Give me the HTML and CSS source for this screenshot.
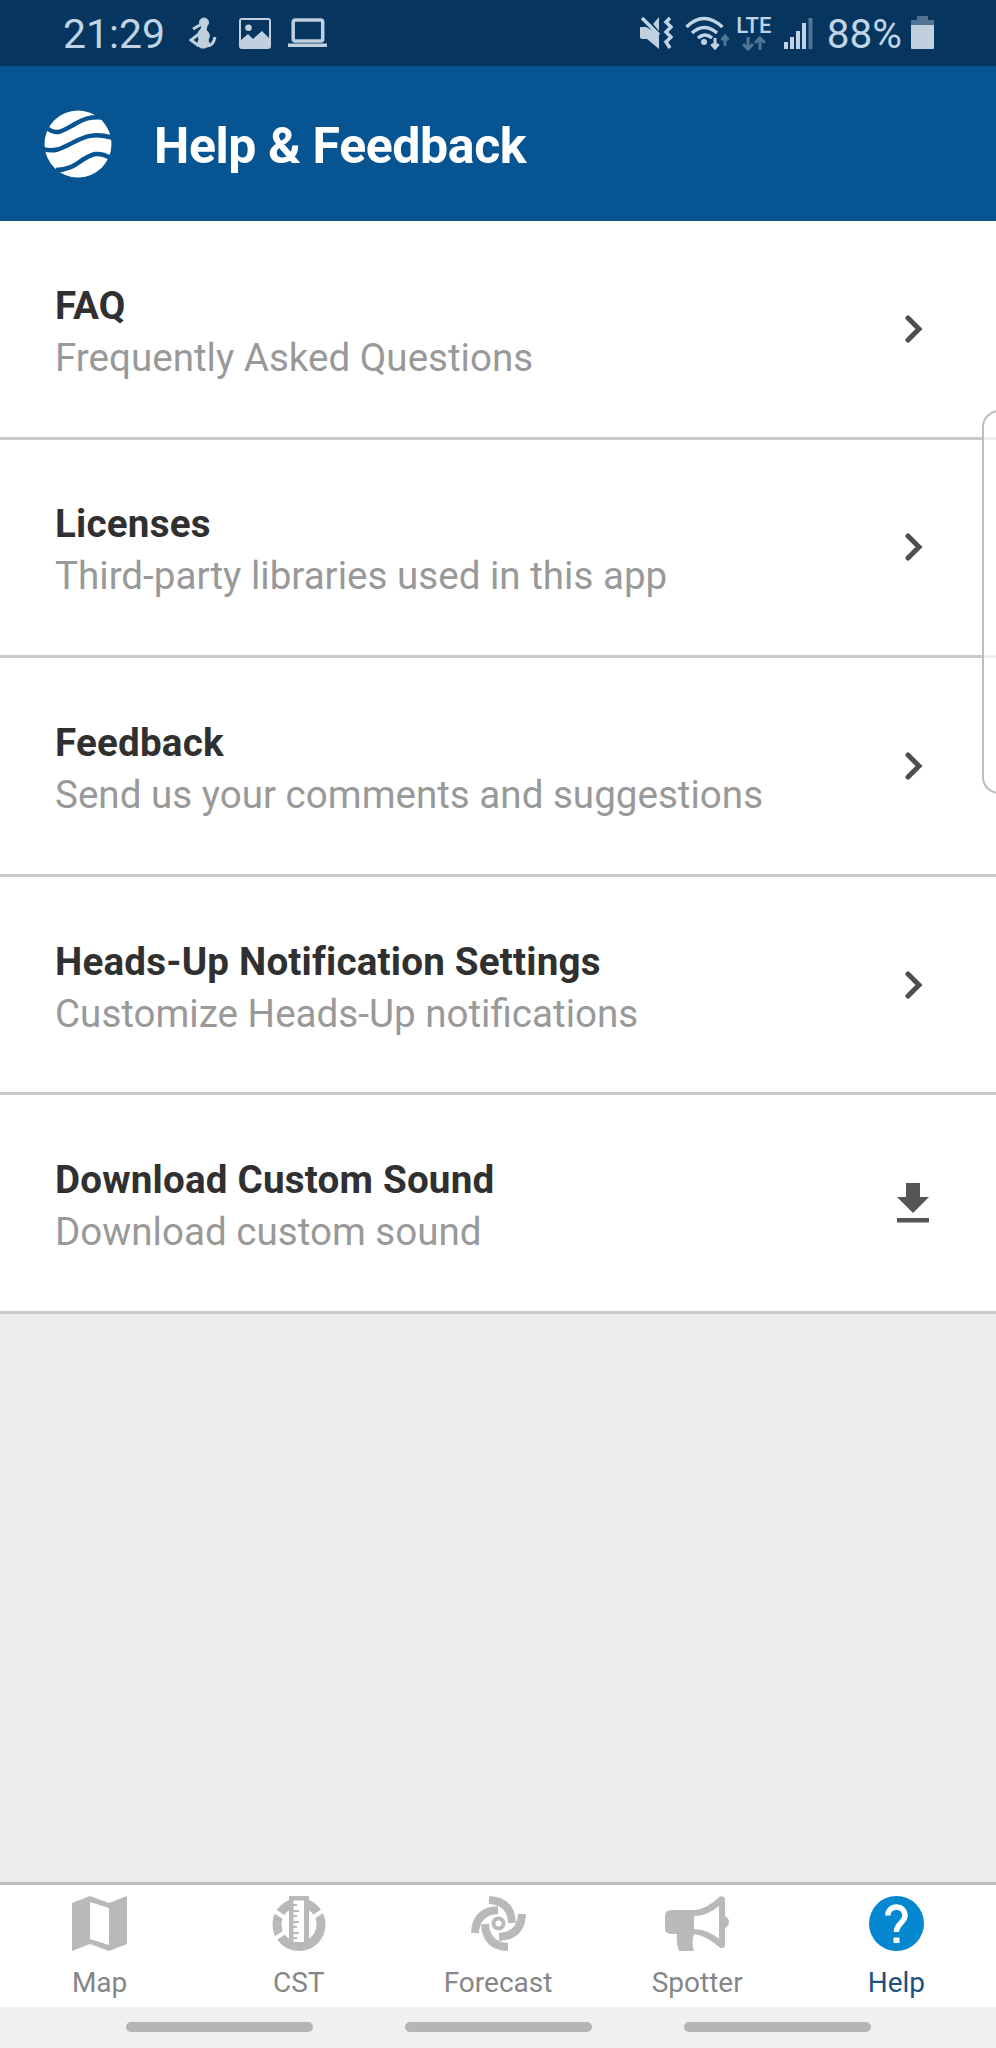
FILE: index.html
```
<!DOCTYPE html>
<html lang="en">
<head>
    <meta charset="UTF-8">
    <meta name="viewport" content="width=device-width, initial-scale=1.0">
    <title>Help &amp; Feedback</title>
    <link rel="stylesheet" href="styles.css">
</head>
<body>
    <div class="app">
        <div class="status-bar">
            <span class="time">21:29</span>
            <svg class="status-person" width="28" height="32" viewBox="0 0 28 32">
                <circle cx="15" cy="5.500" r="4.500" />
                <path d="M13 9h5l-1 4c4 3 4 7 2 10l2 5-5 3h-4l-4-3 2-6c-2-4-1-8 2-10z" />
                <path d="M4 12l7-4M10 17l-8 6 8 6M18 29c5 0 7-4 8-9" />
            </svg>
            <svg class="status-image" width="32" height="31" viewBox="0 0 32 31">
                <path fill-rule="evenodd" d="M3 0h26a3 3 0 0 1 3 3v25a3 3 0 0 1-3 3H3a3 3 0 0 1-3-3V3a3 3 0 0 1 3-3zM2 2v20l7-6 5 5 9-8 7 7V2zM9.500 6.500a3.300 3.300 0 1 1 0 6.600 3.300 3.300 0 0 1 0-6.600z" />
            </svg>
            <svg class="status-laptop" width="39" height="30" viewBox="0 0 39 30">
                <rect x="5.200" y="2" width="29.500" height="21" rx="2" />
                <path d="M0 27.300h39" />
            </svg>
            <div class="status-right">
                <svg width="34" height="34" viewBox="0 0 34 34">
                    <path class="solid" d="M1 11h6l13 7v15L8 23H3q-2 0-2-2zM14 8l6-7v14z" />
                    <path class="line" d="M3 2l17 17M31 2l-4 4 5 5-5 5 5 5-5 5 4 6" />
                </svg>
                <svg class="wifi" width="45" height="34" viewBox="0 0 45 34">
                    <path class="line" d="M1.500 11q17-17 36 0M7 17q12-11 25 0M13 22q7-6 14 0" />
                    <circle class="solid" cx="19" cy="26" r="3" />
                    <path class="line thin" d="M30 22v10M26.500 28l3.500 4 3.500-4" />
                    <path class="line thin dim" d="M40 30V20M36.500 24l3.500-4 3.500 4" />
                </svg>
                <div class="lte">
                    <span>LTE</span>
                    <svg width="24" height="15" viewBox="0 0 24 15">
                        <path class="line thin dim" d="M6 1v12M1 8l5 5 5-5M18 14V2M13 7l5-5 5 5" />
                    </svg>
                </div>
                <svg class="signal" width="29" height="32" viewBox="0 0 29 32">
                    <path class="line bar" d="M2 32v-7M8 32V20M14 32V14M20 32V6" />
                    <path class="line bar dim" d="M26.500 32V1" />
                </svg>
                <span class="percent">88%</span>
                <svg class="battery" width="23" height="34" viewBox="0 0 23 34">
                    <path class="solid dim" d="M6 0h11v4h6v6H0V4h6z" />
                    <path class="solid" d="M0 9h23v23q0 1-1 1H1q-1 0-1-1z" />
                </svg>
            </div>
        </div>

        <div class="header">
            <svg class="logo" width="68" height="68" viewBox="0 0 68 68">
                <circle cx="34" cy="34" r="33.500" />
                <path d="M2 17C12 27 20 20 30 14.500S46 6 60 7.500" />
                <path d="M-1 39C12 43 20 37 30 32S50 22 69 28" />
                <path d="M12 60C26 60 32 54 40 49S54 41 67 48" />
            </svg>
            <h1>Help &amp; Feedback</h1>
        </div>

        <div class="list">
            <div class="row">
                <div class="row-text">
                    <h2>FAQ</h2>
                    <p>Frequently Asked Questions</p>
                </div>
                <svg class="chevron" width="18" height="28" viewBox="0 0 18 28"><path d="M3 3l11 11L3 25" /></svg>
            </div>
            <div class="row">
                <div class="row-text">
                    <h2>Licenses</h2>
                    <p>Third-party libraries used in this app</p>
                </div>
                <svg class="chevron" width="18" height="28" viewBox="0 0 18 28"><path d="M3 3l11 11L3 25" /></svg>
            </div>
            <div class="row">
                <div class="row-text">
                    <h2>Feedback</h2>
                    <p>Send us your comments and suggestions</p>
                </div>
                <svg class="chevron" width="18" height="28" viewBox="0 0 18 28"><path d="M3 3l11 11L3 25" /></svg>
            </div>
            <div class="row">
                <div class="row-text">
                    <h2>Heads-Up Notification Settings</h2>
                    <p>Customize Heads-Up notifications</p>
                </div>
                <svg class="chevron" width="18" height="28" viewBox="0 0 18 28"><path d="M3 3l11 11L3 25" /></svg>
            </div>
            <div class="row">
                <div class="row-text">
                    <h2>Download Custom Sound</h2>
                    <p>Download custom sound</p>
                </div>
                <svg class="download" width="32" height="40" viewBox="0 0 32 40">
                    <path d="M9 0h14v14h9L16 30 0 14h9zM0 35h32v4.500H0z" />
                </svg>
            </div>
        </div>

        <div class="tabs">
            <div class="tab">
                <svg width="55" height="55" viewBox="0 0 55 55">
                    <path fill-rule="evenodd" d="M0 7L18 0l19 7L55 0v48l-18 7-19-7-18 7zM18 6v37l19 6V12z" />
                </svg>
                <span>Map</span>
            </div>
            <div class="tab">
                <svg width="55" height="55" viewBox="0 0 55 55">
                    <circle class="ring" cx="28" cy="28.500" r="22" />
                    <path class="cut" d="M2 14l12 8M2 44l12-8M53 14l-12 8" />
                    <path d="M18 0h20v50H18z" />
                    <path class="white" d="M22.500 4.500h10.500v41.500H22.500z" />
                    <path class="ticks" d="M22 9h4M22 15h6M22 20h4M22 26h6M22 31h4M22 37h6M22 42h4" />
                </svg>
                <span>CST</span>
            </div>
            <div class="tab">
                <svg width="55" height="55" viewBox="0 0 55 55">
                    <g class="swirl">
                        <path d="M18 4Q40 5 41 27" />
                        <path d="M51 18Q50 40 28 41" />
                        <path d="M37 51Q15 50 14 28" />
                        <path d="M4 37Q5 15 27 14" />
                        <circle cx="27.500" cy="27.500" r="5" />
                    </g>
                </svg>
                <span>Forecast</span>
            </div>
            <div class="tab">
                <svg width="64" height="55" viewBox="0 0 64 55">
                    <path fill-rule="evenodd" d="M7 14h23q12-1 24-13 3-2 6 1v18q4 2 4 6t-4 6v18q-2 4-6 1-12-11-25-13-3 8 0 17H14q-3-8-2-17H7q-7 0-7-6V20q0-6 7-6zM29 20v13q13 0 25 10V10q-12 10-25 10z" />
                </svg>
                <span>Spotter</span>
            </div>
            <div class="tab active">
                <svg width="55" height="55" viewBox="0 0 55 55">
                    <circle cx="27.500" cy="27.500" r="27.500" />
                    <path class="question" d="M18.800 19.500a8.600 8.600 0 0 1 17.200 0c0 7-8.600 8-8.600 16.500" />
                    <path class="white" d="M24.500 41.500h6v5.500h-6z" />
                </svg>
                <span>Help</span>
            </div>
        </div>

        <div class="system-nav">
            <div class="pill"></div>
            <div class="pill"></div>
            <div class="pill"></div>
        </div>

        <div class="edge-panel"></div>
    </div>
</body>
</html>
```
FILE: styles.css
```
/* General Styles */
* {
    box-sizing: border-box;
}

body {
    margin: 0;
    font-family: Roboto, sans-serif;
    background: #ededed;
}

h1, h2, p {
    margin: 0;
}

svg {
    display: block;
    flex-shrink: 0;
}

.app {
    position: relative;
    display: flex;
    flex-direction: column;
    width: 996px;
    height: 2048px;
    overflow: hidden;
}

/* Status Bar */
.status-bar {
    display: flex;
    align-items: center;
    height: 66px;
    padding: 0 62px 0 63px;
    background: #06365f;
    color: #c0d4e6;
    fill: #c0d0df;
    stroke: none;
}

.time {
    width: 126px;
    padding-top: 1px;
    font-size: 41px;
    line-height: 66px;
}

.status-person {
    stroke: #c0d0df;
    stroke-width: 1;
}

.status-person path:last-child {
    fill: none;
    stroke-width: 3;
}

.status-image {
    margin-left: 22px;
}

.status-laptop {
    margin-left: 17px;
    fill: none;
    stroke: #c0d0df;
    stroke-width: 3.5;
}

.status-right {
    display: flex;
    align-items: center;
    margin-left: auto;
}

.line {
    fill: none;
    stroke: #c0d4e6;
    stroke-width: 3.5;
}

.thin {
    stroke-width: 3;
}

.bar {
    stroke-width: 4;
}

.dim {
    opacity: 0.4;
}

.wifi {
    margin-left: 12px;
}

.lte {
    display: flex;
    flex-direction: column;
    align-items: center;
    width: 34px;
    margin-left: 7px;
    font-size: 22px;
    font-weight: 500;
    line-height: 20px;
}

.signal {
    margin-left: 13px;
}

.percent {
    margin-left: 14px;
    padding-top: 1px;
    font-size: 40.5px;
    line-height: 66px;
}

.battery {
    margin-left: 9px;
}

/* Header */
.header {
    display: flex;
    align-items: center;
    height: 155px;
    padding-left: 44px;
    background: #075492;
    color: white;
}

.logo {
    fill: white;
}

.logo path {
    fill: none;
    stroke: #075492;
    stroke-width: 4.5;
}

.header h1 {
    margin-left: 42px;
    padding-top: 5px;
    font-size: 50px;
    font-weight: 700;
    line-height: 60px;
    letter-spacing: -0.4px;
}

/* List */
.list {
    display: flex;
    flex-direction: column;
    height: 1093px;
    background: white;
}

.row {
    display: flex;
    flex: 1;
    align-items: center;
    justify-content: space-between;
    padding-left: 55px;
    border-bottom: 3px solid #cacaca;
}

.row-text {
    padding-top: 6px;
    font-size: 38.6px;
    line-height: 52px;
}

.row-text h2 {
    font-size: 38.6px;
    font-weight: 700;
    letter-spacing: 0.2px;
    color: #303030;
}

.row-text p {
    color: #999;
}

.chevron {
    margin-right: 73px;
    fill: none;
    stroke: #4e4e4e;
    stroke-width: 5;
    stroke-linecap: round;
}

.download {
    margin-right: 67px;
    fill: #555;
}

/* Bottom Tabs */
.tabs {
    display: flex;
    height: 125px;
    margin-top: auto;
    background: white;
    border-top: 3px solid #bdbdbd;
    fill: #b9b9b9;
}

.tab {
    display: flex;
    flex: 1;
    flex-direction: column;
    align-items: center;
    padding-top: 11px;
    font-size: 28px;
    color: #868686;
}

.tab span {
    margin-top: 16px;
    line-height: 32px;
}

.ring {
    fill: none;
    stroke: #b9b9b9;
    stroke-width: 9;
}

.cut {
    stroke: white;
    stroke-width: 4;
}

.white {
    fill: white;
}

.ticks {
    stroke: #b9b9b9;
    stroke-width: 2;
}

.swirl {
    fill: none;
    stroke: #b9b9b9;
    stroke-width: 8;
}

.swirl circle {
    stroke-width: 4;
}

.active {
    color: #1d4f80;
    fill: #0688d0;
}

.question {
    fill: none;
    stroke: white;
    stroke-width: 5.5;
}

/* System Navigation */
.system-nav {
    display: flex;
    align-items: center;
    justify-content: center;
    gap: 92px;
    height: 41px;
    padding-bottom: 1px;
    background: #f0f0f0;
}

.pill {
    width: 187px;
    height: 10px;
    border-radius: 5px;
    background: #b5b5b5;
}

/* Edge Panel */
.edge-panel {
    position: absolute;
    top: 410px;
    right: -20px;
    width: 34px;
    height: 384px;
    border: 2px solid #bdbdbd;
    border-radius: 19px;
    background: rgba(255, 255, 255, 0.7);
}
```
